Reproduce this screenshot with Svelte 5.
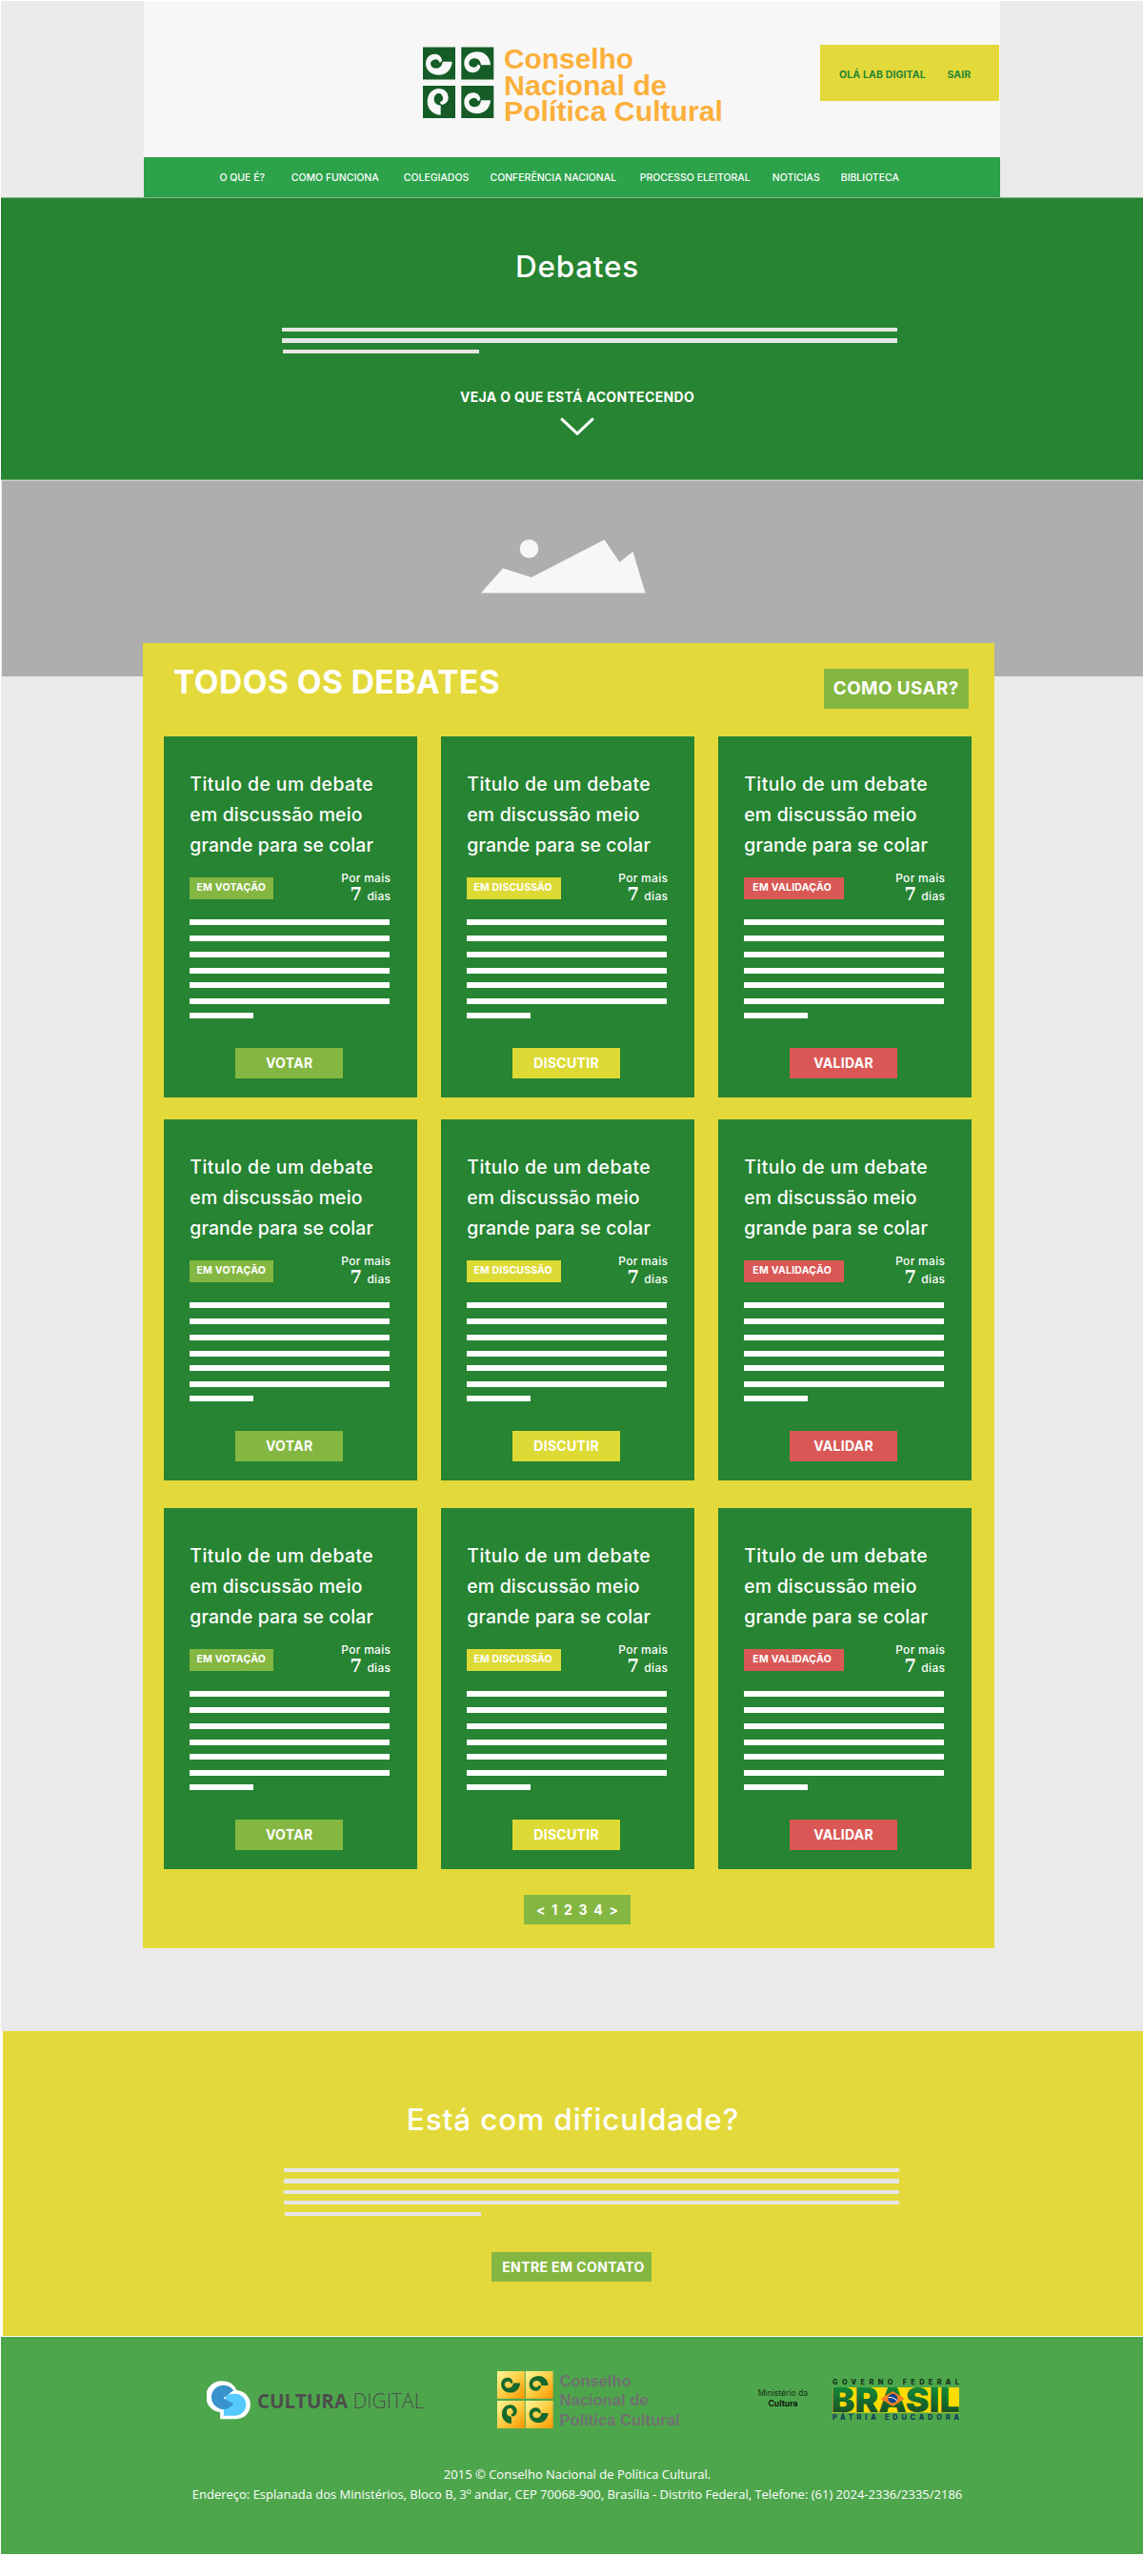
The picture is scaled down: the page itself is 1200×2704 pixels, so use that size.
<script>
  const menu = ['O QUE É?', 'COMO FUNCIONA', 'COLEGIADOS', 'CONFERÊNCIA NACIONAL', 'PROCESSO ELEITORAL', 'NOTICIAS', 'BIBLIOTECA'];

  const kinds = [
    { id: 'vote', status: 'EM VOTAÇÃO', action: 'VOTAR' },
    { id: 'discuss', status: 'EM DISCUSSÃO', action: 'DISCUTIR' },
    { id: 'validate', status: 'EM VALIDAÇÃO', action: 'VALIDAR' }
  ];
  const rows = [kinds, kinds, kinds];
  const titleLines = ['Titulo de um debate', 'em discussão meio', 'grande para se colar'];
  const pages = ['<', '1', '2', '3', '4', '>'];
</script>

{#snippet spiral()}
  <path d="M92 46C91 70 74 88 50 88C26 88 9 72 9 52C9 34 21 22 37 22C50 22 58 30 60 41C59 45 56 48 52 48C49 41 44 37 37 39C28 41 24 46 24 52C25 62 32 67 42 67C54 67 61 58 62 46Z" />
{/snippet}

{#snippet lines(n)}
  {#each Array(n) as _}<i></i>{/each}
{/snippet}

<div class="page">
  <header>
    <div class="top">
      <svg class="brand" width="320" height="86" viewBox="0 0 320 86">
        <g class="tile">
          <rect x="0" y="3.5" width="34" height="34" />
          <rect x="40.3" y="3.5" width="34" height="34" />
          <rect x="0" y="44" width="34" height="34" />
          <rect x="40.3" y="44" width="34" height="34" />
        </g>
        <g class="mark">
          <g transform="translate(0 3.5) scale(.3333)">{@render spiral()}</g>
          <g transform="translate(40.3 37.5) scale(.3333 -.3333)">{@render spiral()}</g>
          <g transform="translate(34 44) rotate(90) scale(.3333)">{@render spiral()}</g>
          <g transform="translate(40.3 44) scale(.3333)">{@render spiral()}</g>
        </g>
        <g class="name">
          <text x="85" y="25.5" textLength="136" lengthAdjust="spacingAndGlyphs">Conselho</text>
          <text x="85" y="53.5" textLength="171" lengthAdjust="spacingAndGlyphs">Nacional de</text>
          <text x="85" y="81" textLength="230" lengthAdjust="spacingAndGlyphs">Política Cultural</text>
        </g>
      </svg>
      <div class="user"><span>OLÁ LAB DIGITAL</span><span>SAIR</span></div>
    </div>
    <nav>{#each menu as item}<a href="#top">{item}</a>{/each}</nav>
  </header>

  <section class="hero">
    <h1>Debates</h1>
    <div class="lines">{@render lines(3)}</div>
    <p>VEJA O QUE ESTÁ ACONTECENDO</p>
    <svg width="40" height="22" viewBox="0 0 40 22"><path d="M4 3.2L20 18.2L36 3.2" /></svg>
  </section>

  <section class="photo">
    <svg width="176" height="60" viewBox="0 0 176 60">
      <circle cx="53.5" cy="13" r="9.8" />
      <path d="M3 59.5L26 33.5L56 43L132.5 3.5L148.5 27L162.5 16L175.5 59.5Z" />
    </svg>
  </section>

  <main>
    <div class="panel">
      <div class="head">
        <h2>TODOS OS DEBATES</h2>
        <button class="help">COMO USAR?</button>
      </div>
      {#each rows as row}
        <div class="row">
          {#each row as card}
            <article class={card.id}>
              <h3>{#each titleLines as line}<span>{line}</span>{/each}</h3>
              <div class="meta">
                <span class="tag">{card.status}</span>
                <div class="time">
                  <div>Por mais</div>
                  <div><b>7</b><span>dias</span></div>
                </div>
              </div>
              <div class="text">{@render lines(7)}</div>
              <button class="action">{card.action}</button>
            </article>
          {/each}
        </div>
      {/each}
      <div class="pager">{#each pages as p}<span>{p}</span>{/each}</div>
    </div>
  </main>

  <section class="contact">
    <h2>Está com dificuldade?</h2>
    <div class="lines">{@render lines(5)}</div>
    <button>ENTRE EM CONTATO</button>
  </section>

  <footer>
    <div class="logos">
      <svg class="cultura" width="232" height="60" viewBox="0 0 232 60">
        <g transform="translate(.5 10.300) scale(.3333)">
          <path fill="#fff" d="M49 0A50 50 0 0 1 93 29A45.500 45.500 0 0 1 88 120H41V98A49 49 0 0 1 49 0Z" />
          <path fill="#55caff" d="M52 109V89L60 44Q70 40 88 40A34.500 34.500 0 0 1 88 109Z" />
          <path fill="#3a92cc" d="M51 54L83 30A38 38 0 1 0 83 72Z" />
        </g>
        <text class="bold" x="53" y="38.700" textLength="95" lengthAdjust="spacingAndGlyphs">CULTURA</text>
        <text class="thin" x="153.500" y="38.700" textLength="75" lengthAdjust="spacingAndGlyphs">DIGITAL</text>
      </svg>

      <svg class="council" width="200" height="60" viewBox="0 0 200 60">
        <defs>
          <linearGradient id="gold" x1="0" y1="0" x2="1" y2="1">
            <stop offset="0" stop-color="#fff79a" />
            <stop offset=".55" stop-color="#ffc93c" />
            <stop offset="1" stop-color="#ff9400" />
          </linearGradient>
        </defs>
        <g fill="url(#gold)">
          <rect x="0" y="0" width="28.800" height="28.800" />
          <rect x="29.800" y="0" width="28.800" height="28.800" />
          <rect x="0" y="31" width="28.800" height="29" />
          <rect x="29.800" y="31" width="28.800" height="29" />
        </g>
        <g fill="#17692c">
          <g transform="translate(2 1.500) scale(.24)">{@render spiral()}</g>
          <g transform="translate(31.500 26) scale(.24 -.24)">{@render spiral()}</g>
          <g transform="translate(26 33) rotate(90) scale(.24)">{@render spiral()}</g>
          <g transform="translate(31.500 33) scale(.24)">{@render spiral()}</g>
        </g>
        <g class="gray">
          <text x="65.500" y="16" textLength="75" lengthAdjust="spacingAndGlyphs">Conselho</text>
          <text x="65.500" y="36.300" textLength="93" lengthAdjust="spacingAndGlyphs">Nacional de</text>
          <text x="65.500" y="57" textLength="126" lengthAdjust="spacingAndGlyphs">Política Cultural</text>
        </g>
      </svg>

      <div class="ministry">Ministério da<b>Cultura</b></div>

      <svg class="brasil" width="134" height="60" viewBox="0 0 134 60">
        <defs>
          <linearGradient id="leaf" x1="0" y1="0" x2="0" y2="1">
            <stop offset="0" stop-color="#0f9a3c" />
            <stop offset="1" stop-color="#1b4023" />
          </linearGradient>
        </defs>
        <text class="small" x="0" y="14" textLength="133" fill="#12301a">GOVERNO FEDERAL</text>
        <rect x="0" y="17" width="133" height="26.500" fill="#ffdb00" />
        <text class="big" x="-1.500" y="43.300" textLength="135" lengthAdjust="spacingAndGlyphs" fill="url(#leaf)">BRASIL</text>
        <path fill="#f58220" d="M50.500 29L63.300 21L76 29L63.300 37Z" />
        <circle cx="63.300" cy="28.600" r="4.900" fill="#123f8c" />
        <path fill="none" stroke="#fff" stroke-width="1.100" d="M58.700 27.600Q64 27 67.700 31" />
        <text class="small" x="0" y="51" textLength="133" fill="#0d3a56">PÁTRIA EDUCADORA</text>
      </svg>
    </div>
    <p>2015 © Conselho Nacional de Política Cultural.</p>
    <p>Endereço: Esplanada dos Ministérios, Bloco B, 3º andar, CEP 70068-900, Brasília - Distrito Federal, Telefone: (61) 2024-2336/2335/2186</p>
  </footer>
</div>

<style>
  :global(body) { margin: 0; background: #fff; }
  * { box-sizing: border-box; }
  h1, h2, h3, p { margin: 0; font-weight: 500; }
  svg { display: block; flex: none; }
  button { padding: 0; border: 0; color: #fff; background: #84b741; font: 700 14px/31px Inter, sans-serif; letter-spacing: .3px; text-align: center; white-space: nowrap; }
  i { display: block; }

  .page { width: 1200px; height: 2704px; padding: 1px 0 0 1px; overflow: hidden; font-family: Inter, 'Open Sans', sans-serif; color: #fff; }

  header { height: 206px; padding-left: 150px; background: #eaeaea; }
  .top { display: flex; width: 899px; height: 164px; padding-left: 293px; background: #f7f7f7; }
  .brand { margin-top: 45px; }
  .tile { fill: #155c27; }
  .mark { fill: #f7f7f7; }
  .name { fill: #fbb03b; font: 700 29px 'Liberation Sans', sans-serif; }
  .user { display: flex; gap: 22.5px; width: 188px; height: 59px; margin: 46px 1px 0 auto; padding: 3px 0 0 20px; background: #e4d93b; color: #258535; font-size: 10.5px; font-weight: 700; line-height: 57px; letter-spacing: .14px; white-space: nowrap; }
  nav { display: grid; grid-template-columns: 75.3px 118px 90.7px 157.3px 139px 72px auto; width: 899px; height: 42px; padding-left: 79.5px; background: #2ca24a; font-size: 10.5px; font-weight: 500; line-height: 43px; letter-spacing: -.02px; }
  nav a { color: #fff; text-decoration: none; white-space: nowrap; }

  .hero { display: flex; flex-direction: column; align-items: center; height: 297px; padding: 52px 0 0 11px; border-top: 1px solid #85b78c; border-bottom: 1px solid #6cab75; background: #268432; }
  h1 { font-size: 31.5px; line-height: 40px; letter-spacing: .75px; }
  .lines { display: flex; flex-direction: column; gap: 7.2px; width: 646px; }
  .lines i { height: 4.2px; background: #e6e6e6; }
  .lines i:last-child { width: 206px; margin-left: 1px; }
  .hero .lines { align-self: flex-start; margin: 44px 0 0 284px; }
  .hero p { margin-top: 36px; font-size: 14px; font-weight: 700; line-height: 20px; letter-spacing: .33px; }
  .hero svg { margin: 10.5px 1px 0 0; fill: none; stroke: #fff; stroke-width: 3; stroke-linecap: round; }

  .photo { height: 206px; padding: 58px 0 0 500px; border-top: 1px solid #d2d2d2; border-left: 1px solid #eee; background: #aeaeae; }
  .photo svg { fill: #f7f7f7; }

  main { height: 1421.5px; padding-left: 149px; background: #eaeaea; }
  .panel { position: relative; top: -35px; width: 894px; height: 1369.5px; padding-left: 22px; background: #e4d93b; }
  .head { display: flex; justify-content: space-between; height: 98px; padding: 27px 27.5px 0 10px; }
  .head h2 { font-size: 33.5px; font-weight: 700; line-height: 28px; letter-spacing: .45px; }
  .help { width: 151.5px; height: 41.5px; font-size: 18.8px; line-height: 42px; letter-spacing: .45px; }
  .row { display: flex; gap: 25.4px; margin-bottom: 23.3px; }
  .row:nth-child(3) { margin-bottom: 29.3px; }
  .row:nth-child(4) { margin-bottom: 0; }
  article { width: 265.6px; height: 378.7px; padding: 34px 27.3px 0; background: #268432; }
  h3 { font-size: 19.4px; line-height: 32.2px; white-space: nowrap; }
  h3 span { display: block; letter-spacing: .44px; }
  h3 span:nth-child(2) { letter-spacing: .2px; }
  h3 span:nth-child(3) { letter-spacing: .1px; }
  .meta { display: flex; justify-content: space-between; height: 61.4px; padding-top: 9px; }
  .tag { width: 87.4px; height: 23.2px; margin-top: 8px; padding-left: 7.2px; background: #84b741; font-size: 10.5px; font-weight: 700; line-height: 22px; letter-spacing: .24px; white-space: nowrap; }
  .time { font-size: 12px; font-weight: 500; line-height: 17.6px; letter-spacing: .3px; text-align: right; }
  .time div { height: 17.6px; white-space: nowrap; }
  .time b { margin-right: 5px; font: 700 18px/17px 'DejaVu Serif', serif; }
  .text i { width: 209.5px; height: 6px; margin-bottom: 11px; background: #fff; }
  .text i:nth-child(4) { margin-bottom: 9.3px; }
  .text i:nth-child(6) { margin-bottom: 9px; }
  .text i:nth-child(7) { width: 67px; margin-bottom: 0; }
  .action { display: block; width: 112.3px; height: 31.4px; margin: 31px 0 0 48.2px; }
  .discuss .tag { width: 99.2px; letter-spacing: .15px; }
  .discuss .tag, .discuss .action { background: #ddda35; }
  .validate .tag { width: 105px; padding-left: 9px; }
  .validate .tag, .validate .action { background: #d95855; }
  .pager { display: flex; justify-content: space-between; width: 112px; height: 31px; margin: 27.2px 0 0 378px; padding: 0 13px 0 13px; background: #84b741; font-size: 14px; font-weight: 700; line-height: 31px; }

  .contact { display: flex; flex-direction: column; align-items: center; height: 320.5px; margin-left: 2px; padding-top: 73.5px; background: #e4d93b; }
  .contact h2 { font-size: 31.5px; line-height: 40px; letter-spacing: .87px; }
  .contact .lines { align-self: flex-start; margin: 31px 0 0 295px; }
  .contact button { width: 168.5px; height: 31.3px; margin: 38.2px 3px 0 0; padding-left: 4px; letter-spacing: .4px; }

  footer { height: 228px; margin-top: 1px; padding-top: 36px; background: #4ea64c; }
  .logos { display: flex; align-items: flex-start; height: 60px; padding-left: 216.3px; }
  .cultura { fill: #4d4d4d; font: 22px 'Open Sans', sans-serif; }
  .bold { font-weight: 700; }
  .thin { font-weight: 300; }
  .council { margin-left: 72.7px; }
  .gray { fill: #707070; font: 700 16.3px 'Liberation Sans', sans-serif; }
  .ministry { width: 60px; margin: 18px 0 0 70px; color: #14301a; font-size: 8.6px; line-height: 11px; text-align: center; white-space: nowrap; }
  .ministry b { display: block; color: #0a140b; }
  .brasil { margin-left: 22.5px; }
  .small { font: 800 7.3px Inter, sans-serif; }
  .big { font: 900 36px Inter, sans-serif; }
  footer p { padding-left: 11px; font: 13px/21px 'Open Sans', sans-serif; text-align: center; white-space: nowrap; }
  .logos + p { margin-top: 38px; }
</style>
